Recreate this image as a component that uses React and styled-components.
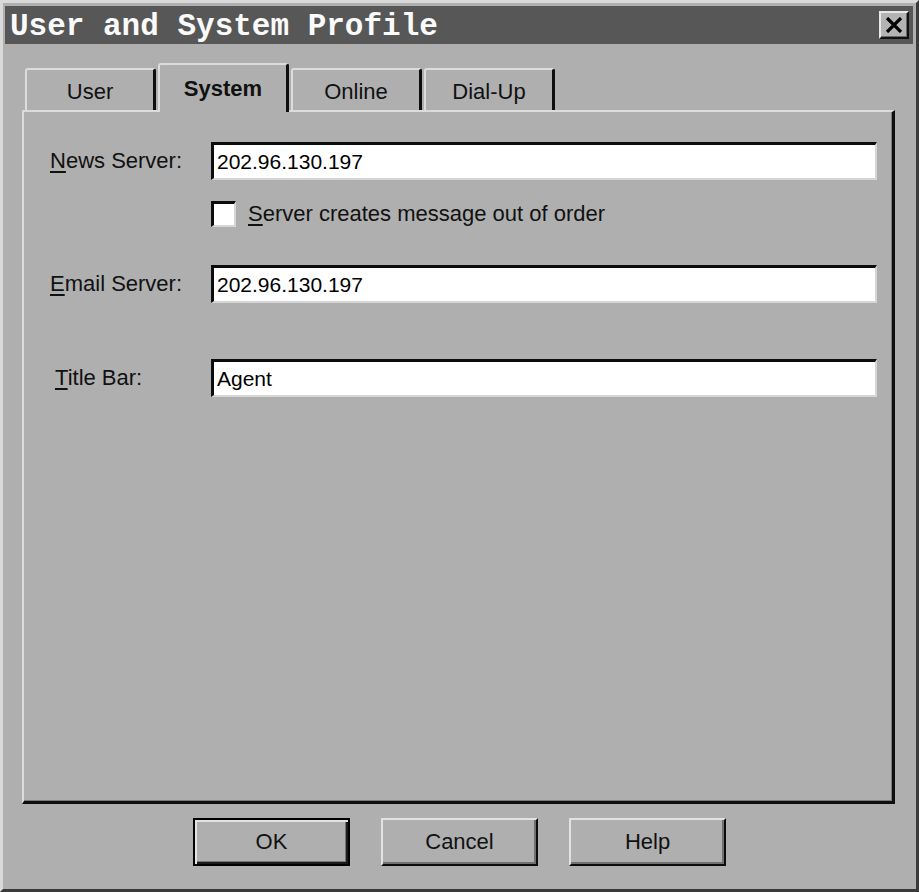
import React from 'react';
import styled, { createGlobalStyle } from 'styled-components';

const GlobalStyle = createGlobalStyle`
  html, body {
    margin: 0;
    padding: 0;
    background: #afafaf;
  }
  * {
    box-sizing: border-box;
  }
`;

const Window = styled.div`
  width: 919px;
  height: 892px;
  background: #afafaf;
  border-style: solid;
  border-width: 3px;
  border-color: #d9d9d9 #3a3a3a #3a3a3a #d9d9d9;
  display: flex;
  flex-direction: column;
  font-family: "Liberation Sans", Arial, sans-serif;
  color: #111;
`;

const TitleBar = styled.div`
  height: 38px;
  margin: 3px 3px 0 2px;
  background: #575757;
  display: flex;
  align-items: center;
  justify-content: space-between;
  padding: 0 4px 0 5px;
`;

const Caption = styled.span`
  font-family: "Liberation Mono", "Courier New", monospace;
  font-weight: bold;
  font-size: 31px;
  color: #fafafa;
  letter-spacing: 0;
  line-height: 1;
  padding-top: 2px;
`;

const CloseButton = styled.button`
  width: 30px;
  height: 28px;
  padding: 0;
  background: #b4b4b4;
  border-style: solid;
  border-width: 2px;
  border-color: #e8e8e8 #111 #111 #e8e8e8;
  box-shadow: inset -1px -1px 0 #6a6a6a;
  display: flex;
  align-items: center;
  justify-content: center;
`;

const TabStrip = styled.div`
  display: flex;
  align-items: flex-end;
  gap: 2px;
  height: 47px;
  margin: 19px 0 0 22px;
  position: relative;
  z-index: 1;
`;

const Tab = styled.div`
  width: 131px;
  height: ${({ $active }) => ($active ? '49px' : '42px')};
  margin-bottom: ${({ $active }) => ($active ? '-2px' : '0')};
  padding-top: ${({ $active }) => ($active ? '0' : '4px')};
  background: #afafaf;
  border-style: solid;
  border-width: 2px 3px 0 2px;
  border-color: #dcdcdc #0e0e0e #0e0e0e #dcdcdc;
  border-radius: 3px 3px 0 0;
  display: flex;
  align-items: center;
  justify-content: center;
  font-size: 22px;
  font-weight: ${({ $active }) => ($active ? 'bold' : 'normal')};
`;

const Panel = styled.div`
  margin: 0 21px 0 19px;
  height: 694px;
  border-style: solid;
  border-width: 2px 3px 3px 2px;
  border-color: #dcdcdc #0e0e0e #0e0e0e #dcdcdc;
  box-shadow: inset -1px -1px 0 #7a7a7a;
  padding: 30px 15px 0 26px;
  display: flex;
  flex-direction: column;
`;

const FieldRow = styled.div`
  display: grid;
  grid-template-columns: 161px 1fr;
  align-items: center;
  margin-top: ${({ $gap }) => $gap || 0}px;
`;

const Label = styled.label`
  font-size: 22px;
  padding-left: ${({ $indent }) => $indent || 0}px;
  white-space: nowrap;
`;

const Key = styled.span`
  text-decoration: underline;
  text-underline-offset: 3px;
`;

const TextBox = styled.div`
  height: 38px;
  background: #fff;
  border-style: solid;
  border-width: 3px 2px 2px 3px;
  border-color: #0c0c0c #d6d6d6 #d6d6d6 #0c0c0c;
  padding: 0 0 0 3px;
  display: flex;
  align-items: center;
  font-size: 21px;
  color: #000;
`;

const CheckRow = styled.div`
  display: flex;
  align-items: center;
  gap: 12px;
  margin: 21px 0 0 161px;
  font-size: 22px;
`;

const CheckBox = styled.span`
  width: 25px;
  height: 26px;
  background: #fff;
  border-style: solid;
  border-width: 3px 2px 2px 3px;
  border-color: #0c0c0c #d6d6d6 #d6d6d6 #0c0c0c;
`;

const ButtonRow = styled.div`
  display: flex;
  justify-content: center;
  gap: 31px;
  margin-top: 14px;
`;

const Button = styled.button`
  width: 157px;
  height: 48px;
  background: #afafaf;
  font-family: "Liberation Sans", Arial, sans-serif;
  font-size: 22px;
  color: #111;
  padding: 0;
  border-style: solid;
  border-width: 2px;
  border-color: ${({ $default }) =>
    $default ? '#000' : '#e2e2e2 #0c0c0c #0c0c0c #e2e2e2'};
  box-shadow: ${({ $default }) =>
    $default
      ? 'inset 2px 2px 0 #e2e2e2, inset -2px -2px 0 #1a1a1a, inset -3px -3px 0 #777'
      : 'inset -2px -2px 0 #707070'};
`;

const tabs = ['User', 'System', 'Online', 'Dial-Up'];

export default function App() {
  return (
    <>
      <GlobalStyle />
      <Window>
        <TitleBar>
          <Caption>User and System Profile</Caption>
          <CloseButton aria-label="Close">
            <svg width="18" height="16" viewBox="0 0 18 16">
              <path d="M2 1 L16 15 M16 1 L2 15" stroke="#000" strokeWidth="3.2" />
            </svg>
          </CloseButton>
        </TitleBar>

        <TabStrip>
          {tabs.map((t) => (
            <Tab key={t} $active={t === 'System'}>{t}</Tab>
          ))}
        </TabStrip>

        <Panel>
          <FieldRow>
            <Label><Key>N</Key>ews Server:</Label>
            <TextBox>202.96.130.197</TextBox>
          </FieldRow>

          <CheckRow>
            <CheckBox />
            <span><Key>S</Key>erver creates message out of order</span>
          </CheckRow>

          <FieldRow $gap={38}>
            <Label><Key>E</Key>mail Server:</Label>
            <TextBox>202.96.130.197</TextBox>
          </FieldRow>

          <FieldRow $gap={56}>
            <Label $indent={5}><Key>T</Key>itle Bar:</Label>
            <TextBox>Agent</TextBox>
          </FieldRow>
        </Panel>

        <ButtonRow>
          <Button $default>OK</Button>
          <Button>Cancel</Button>
          <Button>Help</Button>
        </ButtonRow>
      </Window>
    </>
  );
}
